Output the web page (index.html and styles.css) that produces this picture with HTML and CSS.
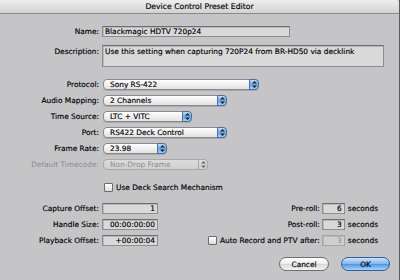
FILE: index.html
```html
<!DOCTYPE html>
<html lang="en">

<head>
    <meta charset="UTF-8">
    <title>Device Control Preset Editor</title>
    <link rel="stylesheet" href="styles.css">
</head>

<body>
    <div class="window">
        <div class="titlebar">Device Control Preset Editor</div>

        <div class="form">
            <div class="row name-row">
                <label class="label">Name:</label>
                <div class="field name-field">Blackmagic HDTV 720p24</div>
            </div>
            <div class="row desc-row">
                <label class="label">Description:</label>
                <div class="field desc-field">Use this setting when capturing 720P24 from BR-HD50 via decklink</div>
            </div>

            <div class="popups">
                <div class="row">
                    <label class="label">Protocol:</label>
                    <div class="popup w-protocol"><span>Sony RS-422</span><i class="arrows"><svg width="5" height="7" viewBox="0 0 5 7"><path d="M2.5 0L5 2.6H0z M2.5 7L5 4.4H0z"/></svg></i></div>
                </div>
                <div class="row">
                    <label class="label">Audio Mapping:</label>
                    <div class="popup w-audio"><span>2 Channels</span><i class="arrows"><svg width="5" height="7" viewBox="0 0 5 7"><path d="M2.5 0L5 2.6H0z M2.5 7L5 4.4H0z"/></svg></i></div>
                </div>
                <div class="row">
                    <label class="label">Time Source:</label>
                    <div class="popup w-time"><span>LTC + VITC</span><i class="arrows"><svg width="5" height="7" viewBox="0 0 5 7"><path d="M2.5 0L5 2.6H0z M2.5 7L5 4.4H0z"/></svg></i></div>
                </div>
                <div class="row">
                    <label class="label">Port:</label>
                    <div class="popup w-port"><span>RS422 Deck Control</span><i class="arrows"><svg width="5" height="7" viewBox="0 0 5 7"><path d="M2.5 0L5 2.6H0z M2.5 7L5 4.4H0z"/></svg></i></div>
                </div>
                <div class="row">
                    <label class="label">Frame Rate:</label>
                    <div class="popup w-rate"><span>23.98</span><i class="arrows"><svg width="5" height="7" viewBox="0 0 5 7"><path d="M2.5 0L5 2.6H0z M2.5 7L5 4.4H0z"/></svg></i></div>
                </div>
                <div class="row disabled">
                    <label class="label">Default Timecode:</label>
                    <div class="popup w-tc"><span>Non-Drop Frame</span><i class="arrows"><svg width="5" height="7" viewBox="0 0 5 7"><path d="M2.5 0L5 2.6H0z M2.5 7L5 4.4H0z"/></svg></i></div>
                </div>
            </div>

            <div class="check-row">
                <span class="checkbox"></span>
                <span>Use Deck Search Mechanism</span>
            </div>

            <div class="offsets">
                <div class="col-left">
                    <div class="row">
                        <label class="label">Capture Offset:</label>
                        <div class="field num">1</div>
                    </div>
                    <div class="row">
                        <label class="label">Handle Size:</label>
                        <div class="field num">00:00:00:00</div>
                    </div>
                    <div class="row">
                        <label class="label">Playback Offset:</label>
                        <div class="field num">+00:00:04</div>
                    </div>
                </div>
                <div class="col-right">
                    <div class="row">
                        <label>Pre-roll:</label>
                        <div class="field small">6</div>
                        <span class="unit">seconds</span>
                    </div>
                    <div class="row">
                        <label>Post-roll:</label>
                        <div class="field small">3</div>
                        <span class="unit">seconds</span>
                    </div>
                    <div class="row">
                        <span class="checkbox"></span>
                        <label>Auto Record and PTV after:</label>
                        <div class="field small off">3</div>
                        <span class="unit">seconds</span>
                    </div>
                </div>
            </div>

            <div class="buttons">
                <button class="btn">Cancel</button>
                <button class="btn default">OK</button>
            </div>
        </div>
    </div>
</body>

</html>
```

FILE: styles.css
```css
body {
    margin: 0;
}

.window {
    width: 400px;
    height: 280px;
    box-sizing: border-box;
    border-right: 1px solid #5c5c5e;
    background-color: #c5c5c7;
    font-family: "DejaVu Sans", sans-serif;
    font-size: 7.4px;
    color: #000;
    -webkit-text-stroke: 0.15px #000;
    overflow: hidden;
}

.titlebar {
    height: 13px;
    line-height: 13px;
    border-bottom: 1px solid #8a8a8c;
    border-top-right-radius: 4px;
    background: linear-gradient(#eeeeee, #d2d2d2);
    text-align: center;
    font-size: 7.7px;
}

.form {
    padding-top: 12px;
}

.row {
    display: flex;
    align-items: center;
    gap: 3px;
}

.label {
    width: 99px;
    flex: none;
    text-align: right;
}

.field {
    box-sizing: border-box;
    height: 11px;
    line-height: 10px;
    padding: 0 2px;
    border: 1px solid #8e8e90;
    border-top-color: #6e6e70;
    background-color: #d9d9da;
    box-shadow: inset 1px 1px 0 #b8b8ba;
    white-space: nowrap;
}

.name-field {
    width: 188px;
}

.desc-row {
    margin-top: 8px;
    align-items: flex-start;
}

.desc-row .label {
    padding-top: 2px;
}

.desc-field {
    width: 282px;
    height: 22px;
    padding-top: 1px;
}

.popups {
    margin-top: 12px;
    display: flex;
    flex-direction: column;
    gap: 5px;
}

.popup {
    position: relative;
    box-sizing: border-box;
    height: 11px;
    margin-left: 1px;
    padding-left: 6px;
    line-height: 9px;
    border: 1px solid #8a8a8c;
    border-radius: 4px;
    background: linear-gradient(#ffffff, #f0f0f0 50%, #e2e2e2);
    box-shadow: 0 1px 0 #a9a9ab;
}

.arrows {
    position: absolute;
    top: -1px;
    right: -1px;
    width: 10px;
    height: 11px;
    box-sizing: border-box;
    border: 1px solid #4f6f9c;
    border-radius: 0 4px 4px 0;
    background: linear-gradient(#c7dcf6, #6ea6e6 50%, #9fcaf4);
    display: flex;
    align-items: center;
    justify-content: center;
}

.arrows svg {
    fill: #1c2a3c;
}

.w-protocol {
    width: 156px;
}

.w-audio {
    width: 124px;
}

.w-time {
    width: 89px;
}

.w-port {
    width: 124px;
}

.w-rate {
    width: 64px;
}

.w-tc {
    width: 105px;
}

.disabled {
    color: #8c8c8e;
    -webkit-text-stroke: 0;
}

.disabled .popup {
    border-color: #a8a8aa;
    background: linear-gradient(#dcdcdd, #d0d0d1);
    box-shadow: none;
}

.disabled .arrows {
    border-color: #a8a8aa;
    background: linear-gradient(#e0e0e1, #cfcfd0);
}

.disabled .arrows svg {
    fill: #6a6a6c;
}

.check-row {
    display: flex;
    align-items: center;
    gap: 3px;
    margin-top: 13px;
    padding-left: 104px;
}

.checkbox {
    display: inline-block;
    width: 7px;
    height: 7px;
    border: 1px solid #6c6c6e;
    border-radius: 1px;
    background: linear-gradient(#ffffff, #dcdcdc);
}

.offsets {
    display: flex;
    justify-content: space-between;
    margin-top: 11px;
    padding-right: 21px;
}

.col-left,
.col-right {
    display: flex;
    flex-direction: column;
    gap: 5px;
}

.col-right .row {
    justify-content: flex-end;
    gap: 2px;
}

.col-right .checkbox {
    margin-right: 1px;
}

.num {
    width: 56px;
    text-align: right;
}

.small {
    width: 23px;
    text-align: right;
}

.off {
    color: #8c8c8e;
    -webkit-text-stroke: 0;
    background-color: #cfcfd0;
    border-color: #a6a6a8;
}

.unit {
    margin-left: 1px;
}

.buttons {
    display: flex;
    justify-content: flex-end;
    gap: 12px;
    margin-top: 11px;
    padding-right: 9px;
}

.btn {
    width: 50px;
    height: 14px;
    padding: 0;
    border: 1px solid #6e6e70;
    border-radius: 7px;
    background: linear-gradient(#ffffff, #ececec 50%, #d8d8d8 51%, #f4f4f4);
    font-family: "DejaVu Sans", sans-serif;
    font-size: 7.4px;
    color: #000;
    -webkit-text-stroke: 0.15px #000;
}

.btn.default {
    width: 49px;
    border-color: #2f5f9e;
    background: linear-gradient(#cfe3fa, #7fb4ee 50%, #4f94e2 51%, #a6d2fa);
}
```
